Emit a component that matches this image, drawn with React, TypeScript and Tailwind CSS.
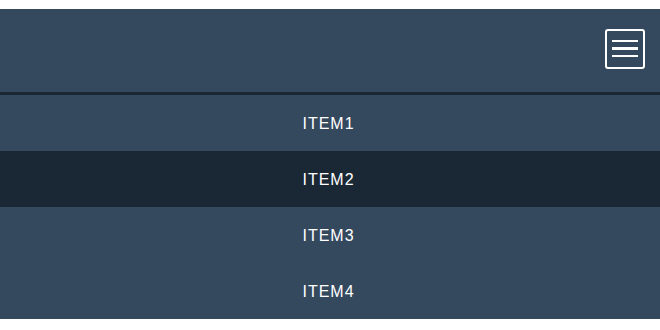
import React from "react";

export default function App() {
  const items = ["ITEM1", "ITEM2", "ITEM3", "ITEM4"];
  return (
    <div className="w-[660px] h-[330px] bg-white pt-[9px]" style={{ fontFamily: '"Liberation Sans", Arial, sans-serif' }}>
      <div className="h-[83px] bg-[#34495e] flex items-center justify-end pr-[15px] border-b-[3px] border-[#1a2735] box-content">
        <button className="w-[40px] h-[40px] border-2 border-white rounded-[3px] flex flex-col items-center justify-center gap-[5px] mt-[-4px]">
          <span className="block w-[26px] h-[2.5px] bg-white" />
          <span className="block w-[26px] h-[2.5px] bg-white" />
          <span className="block w-[26px] h-[2.5px] bg-white" />
        </button>
      </div>
      <ul>
        {items.map((it) => (
          <li
            key={it}
            className={`h-[56px] flex items-center justify-center pt-[2px] pr-[3px] text-white text-[16px] tracking-[1px] ${it === "ITEM2" ? "bg-[#1a2735]" : "bg-[#34495e]"}`}
          >
            {it}
          </li>
        ))}
      </ul>
    </div>
  );
}
